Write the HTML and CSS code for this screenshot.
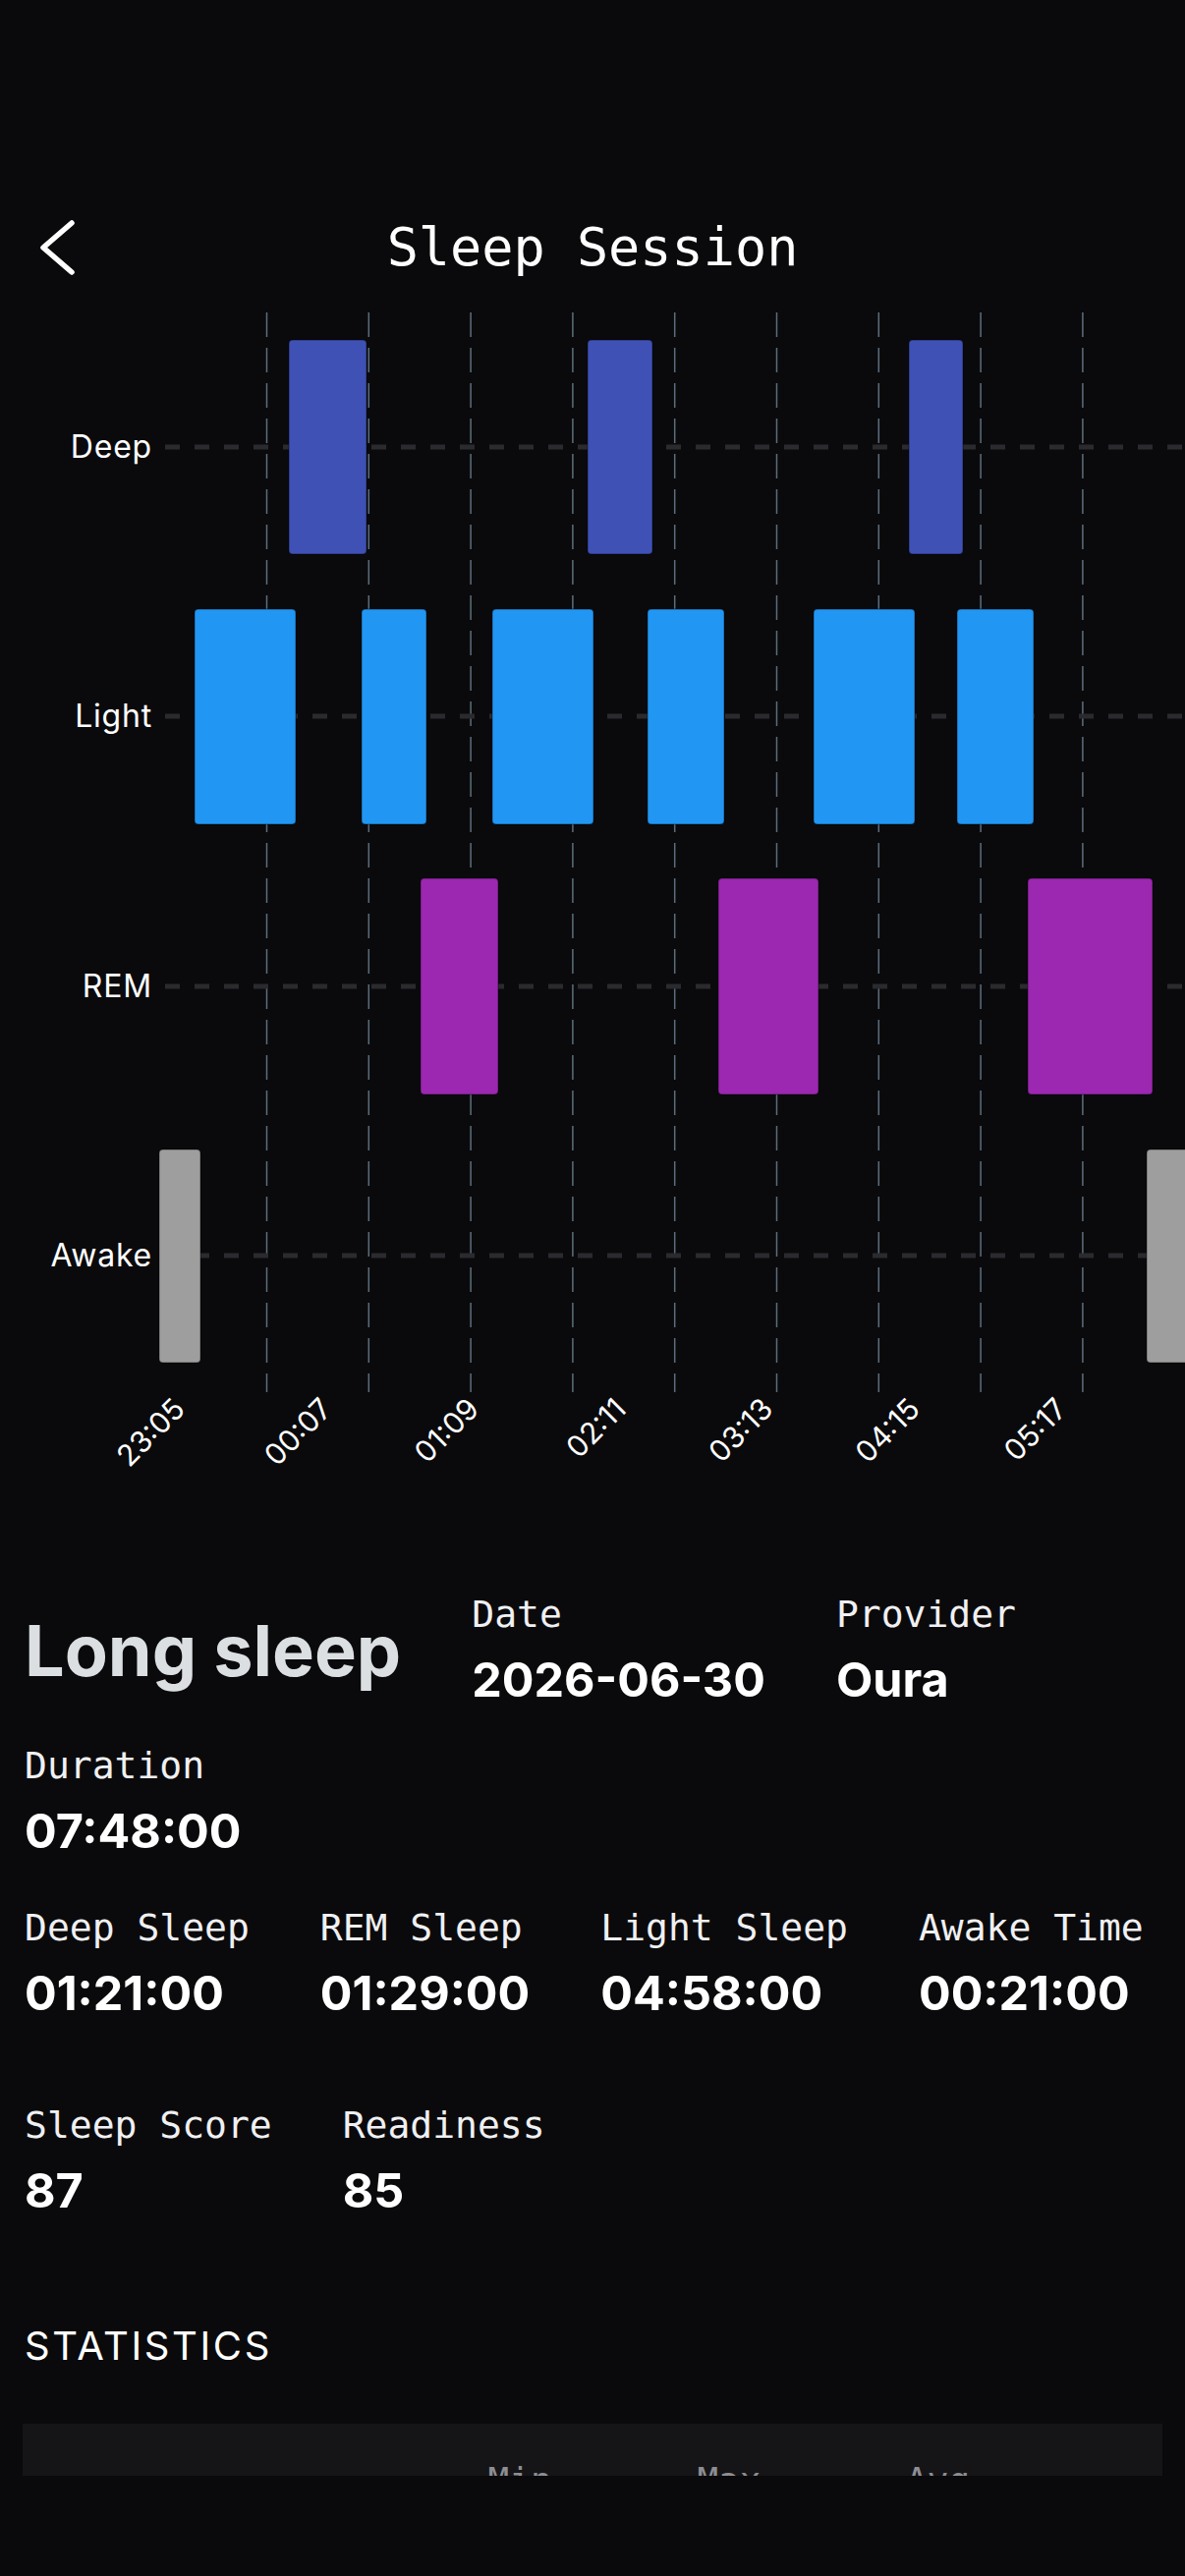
FILE: index.html
```html
<!DOCTYPE html>
<html lang="en">
<head>
    <meta charset="UTF-8">
    <meta name="viewport" content="width=device-width, initial-scale=1.0">
    <title>Sleep Session</title>
    <link rel="stylesheet" href="styles.css">
</head>
<body>
    <div class="screen">
        <header class="topbar">
            <button class="back" aria-label="Back">
                <svg width="36" height="56" viewBox="0 0 36 56">
                    <path d="M33 3 L4 28 L33 53" />
                </svg>
            </button>
            <h1 class="title">Sleep Session</h1>
            <span></span>
        </header>

        <!-- hypnogram: one row per stage, bars placed on the time axis -->
        <svg class="hypnogram" width="1206" height="1200" viewBox="0 0 1206 1200">
            <g class="grid-v">
                <line x1="271.5" y1="18" x2="271.5" y2="1117" />
                <line x1="375.3" y1="18" x2="375.3" y2="1117" />
                <line x1="479.1" y1="18" x2="479.1" y2="1117" />
                <line x1="582.9" y1="18" x2="582.9" y2="1117" />
                <line x1="686.7" y1="18" x2="686.7" y2="1117" />
                <line x1="790.5" y1="18" x2="790.5" y2="1117" />
                <line x1="894.3" y1="18" x2="894.3" y2="1117" />
                <line x1="998.1" y1="18" x2="998.1" y2="1117" />
                <line x1="1101.9" y1="18" x2="1101.9" y2="1117" />
            </g>
            <g class="grid-h">
                <line x1="168" y1="155" x2="1206" y2="155" />
                <line x1="168" y1="429" x2="1206" y2="429" />
                <line x1="168" y1="704" x2="1206" y2="704" />
                <line x1="168" y1="978" x2="1206" y2="978" />
            </g>
            <g class="axis-label">
                <text x="155" y="166">Deep</text>
                <text x="155" y="440">Light</text>
                <text x="155" y="715">REM</text>
                <text x="155" y="989">Awake</text>
            </g>
            <g class="bar deep">
                <rect x="294" y="46" width="79" height="218" rx="4" />
                <rect x="598" y="46" width="66" height="218" rx="4" />
                <rect x="925" y="46" width="55" height="218" rx="4" />
            </g>
            <g class="bar light">
                <rect x="198" y="320" width="103" height="219" rx="4" />
                <rect x="368" y="320" width="66" height="219" rx="4" />
                <rect x="501" y="320" width="103" height="219" rx="4" />
                <rect x="659" y="320" width="78" height="219" rx="4" />
                <rect x="828" y="320" width="103" height="219" rx="4" />
                <rect x="974" y="320" width="78" height="219" rx="4" />
            </g>
            <g class="bar rem">
                <rect x="428" y="594" width="79" height="220" rx="4" />
                <rect x="731" y="594" width="102" height="220" rx="4" />
                <rect x="1046" y="594" width="127" height="220" rx="4" />
            </g>
            <g class="bar awake">
                <rect x="162" y="870" width="42" height="217" rx="4" />
                <rect x="1167" y="870" width="60" height="217" rx="4" />
            </g>
            <g class="tick-label">
                <text transform="translate(190 1136) rotate(-45)">23:05</text>
                <text transform="translate(339.6 1136) rotate(-45)">00:07</text>
                <text transform="translate(489.2 1136) rotate(-45)">01:09</text>
                <text transform="translate(638.8 1136) rotate(-45)">02:11</text>
                <text transform="translate(788.4 1136) rotate(-45)">03:13</text>
                <text transform="translate(938 1136) rotate(-45)">04:15</text>
                <text transform="translate(1087.6 1136) rotate(-45)">05:17</text>
            </g>
        </svg>

        <section class="details">
            <div class="row summary">
                <h2 class="session-type">Long sleep</h2>
                <div class="field">
                    <span class="label">Date</span>
                    <span class="value">2026-06-30</span>
                </div>
                <div class="field">
                    <span class="label">Provider</span>
                    <span class="value">Oura</span>
                </div>
            </div>

            <div class="field duration">
                <span class="label">Duration</span>
                <span class="value">07:48:00</span>
            </div>

            <div class="row stages">
                <div class="field">
                    <span class="label">Deep Sleep</span>
                    <span class="value">01:21:00</span>
                </div>
                <div class="field">
                    <span class="label">REM Sleep</span>
                    <span class="value">01:29:00</span>
                </div>
                <div class="field">
                    <span class="label">Light Sleep</span>
                    <span class="value">04:58:00</span>
                </div>
                <div class="field">
                    <span class="label">Awake Time</span>
                    <span class="value">00:21:00</span>
                </div>
            </div>

            <div class="row scores">
                <div class="field">
                    <span class="label">Sleep Score</span>
                    <span class="value">87</span>
                </div>
                <div class="field">
                    <span class="label">Readiness</span>
                    <span class="value">85</span>
                </div>
            </div>

            <h3 class="section-title">STATISTICS</h3>

            <div class="stats-table">
                <div class="stats-head">
                    <span></span>
                    <span>Min</span>
                    <span>Max</span>
                    <span>Avg</span>
                </div>
            </div>
        </section>
    </div>
</body>
</html>
```

FILE: styles.css
```css
* {
    margin: 0;
    padding: 0;
    box-sizing: border-box;
}

body {
    min-height: 2622px;
    background: #0a0a0c;
    color: #fff;
    font-family: 'Inter', 'Liberation Sans', sans-serif;
}

.screen {
    height: 2520px;
    overflow: hidden;
}

/* header */

.topbar {
    display: grid;
    grid-template-columns: 1fr auto 1fr;
    align-items: center;
    padding-top: 220px;
}

.back {
    justify-self: start;
    display: flex;
    margin-left: 40px;
    background: none;
    border: none;
    cursor: pointer;
}

.back path {
    fill: none;
    stroke: #fff;
    stroke-width: 5.5;
    stroke-linecap: round;
    stroke-linejoin: round;
}

.title {
    font-family: 'DejaVu Sans Mono', monospace;
    font-size: 53.5px;
    line-height: 64px;
    font-weight: 400;
    color: #fff;
}

/* chart */

.hypnogram {
    display: block;
    margin-top: 16px;
}

.grid-v line {
    stroke: #5c6e7c;
    stroke-width: 1.5;
    stroke-dasharray: 25 11;
}

.grid-h line {
    stroke: #2a2a2f;
    stroke-width: 5;
    stroke-dasharray: 15 15;
}

.axis-label text {
    font-family: 'Inter', sans-serif;
    font-size: 32px;
    letter-spacing: 0.8px;
    fill: #fff;
    text-anchor: end;
}

.tick-label text {
    font-family: 'Inter', sans-serif;
    font-size: 30px;
    fill: #fff;
    text-anchor: end;
}

.bar rect {
    stroke: rgba(0, 0, 0, 0.3);
    stroke-width: 1.5;
}

.bar.deep rect { fill: #3f51b5; }
.bar.light rect { fill: #2196f3; }
.bar.rem rect { fill: #9c27b0; }
.bar.awake rect { fill: #9e9e9e; }

/* details */

.details {
    padding: 121px 25px 0;
}

.row {
    display: flex;
    gap: 72px;
    align-items: flex-start;
}

.summary {
    align-items: center;
}

.session-type {
    font-size: 72px;
    line-height: 84px;
    font-weight: 700;
    color: #dcdfe2;
}

.field {
    display: flex;
    flex-direction: column;
}

.label {
    font-family: 'DejaVu Sans Mono', monospace;
    font-size: 38px;
    line-height: 44px;
    color: #f0f0f2;
}

.value {
    margin-top: 17px;
    font-size: 48.5px;
    line-height: 56px;
    font-weight: 700;
    color: #fff;
}

.duration {
    margin-top: 37px;
}

.stages {
    margin-top: 48px;
}

.scores {
    margin-top: 84px;
}

.section-title {
    margin-top: 106px;
    font-size: 40px;
    line-height: 48px;
    font-weight: 400;
    letter-spacing: 2.6px;
    color: #fff;
}

.stats-table {
    margin: 55px -2px 0;
    padding: 36px 48px 40px;
    background: #151518;
}

.stats-head {
    display: grid;
    grid-template-columns: 2fr 1fr 1fr 1fr;
    font-family: 'DejaVu Sans Mono', monospace;
    font-size: 36px;
    line-height: 44px;
    color: #8e8e93;
}
```
